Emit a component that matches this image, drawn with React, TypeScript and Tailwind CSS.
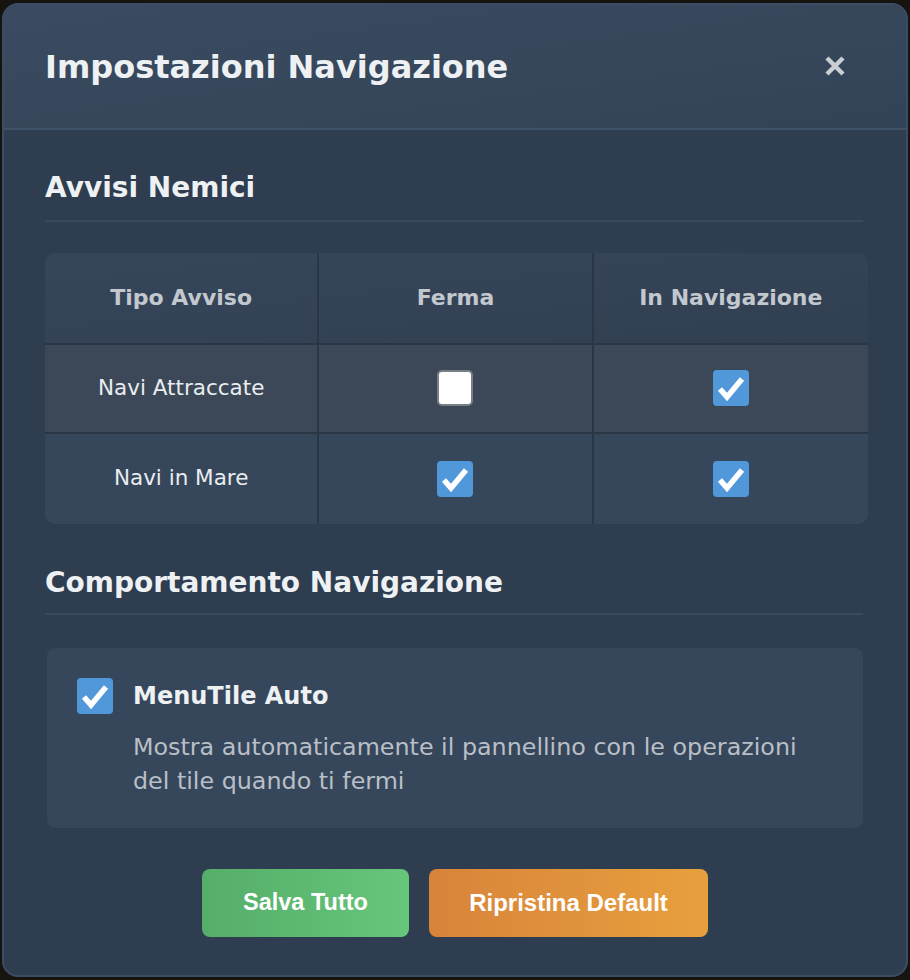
import React from "react";

function Check({ checked }: { checked: boolean }) {
  if (!checked) {
    return (
      <span className="inline-block w-[36px] h-[36px] rounded-[5px] bg-white border-2 border-[#7a7f86]" />
    );
  }
  return (
    <span className="inline-flex w-[36px] h-[36px] rounded-[4px] bg-[#5198da] items-center justify-center">
      <svg width="36" height="36" viewBox="0 0 36 36">
        <polyline
          points="7,19 14,27 29,9"
          fill="none"
          stroke="white"
          strokeWidth="5.5"
          strokeLinejoin="miter"
        />
      </svg>
    </span>
  );
}

const rows = [
  { label: "Navi Attraccate", ferma: false, nav: true, cls: "h-[89px] bg-[#3c4858] border-b-2 border-[#2b3645]" },
  { label: "Navi in Mare", ferma: true, nav: true, cls: "h-[90px] bg-[#36465b]" },
];

export default function App() {
  return (
    <div
      className="w-[910px] h-[980px] bg-[#17130f] pt-[3px] pl-[2px]"
      style={{ fontFamily: '"DejaVu Sans", sans-serif' }}
    >
      <div className="w-[906px] h-[974px] rounded-[16px] border-2 border-[#3b4d64] bg-[#2f3d50] overflow-hidden flex flex-col">
        <div className="h-[125px] shrink-0 bg-gradient-to-br from-[#3a4b61] to-[#334357] border-b-2 border-[#3e526a] flex items-center justify-between pl-[41px] pr-[60px]">
          <h2 className="text-[32px] font-bold text-[#eef1f3] leading-none">
            Impostazioni Navigazione
          </h2>
          <svg width="22" height="22" viewBox="0 0 22 22" className="mt-[-2px]">
            <path d="M3 3 L19 19 M19 3 L3 19" stroke="#c9ced3" strokeWidth="4.5" />
          </svg>
        </div>

        <div className="px-[41px] pt-[41px]">
          <h3 className="text-[28px] font-bold text-[#eef1f3] leading-[1.2] pb-[15px] border-b-2 border-[#3a4a5e] mr-[2px]">
            Avvisi Nemici
          </h3>

          <div className="mt-[31px] rounded-[10px] overflow-hidden -mr-[3px]">
            <div className="grid grid-cols-3 h-[92px] bg-gradient-to-br from-[#36465a] to-[#313f52] border-b-2 border-[#2b3645]">
              {["Tipo Avviso", "Ferma", "In Navigazione"].map((h, i) => (
                <div
                  key={h}
                  className={`flex items-center justify-center text-[22px] font-bold text-[#c2c8ce] ${i < 2 ? "border-r-2 border-[#2b3645]" : ""}`}
                >
                  {h}
                </div>
              ))}
            </div>
            {rows.map((r) => (
              <div key={r.label} className={`grid grid-cols-3 ${r.cls}`}>
                <div className="flex items-center justify-center text-[21.5px] text-[#e9edf0] border-r-2 border-[#2b3645]">
                  {r.label}
                </div>
                <div className="flex items-center justify-center border-r-2 border-[#2b3645]">
                  <Check checked={r.ferma} />
                </div>
                <div className="flex items-center justify-center">
                  <Check checked={r.nav} />
                </div>
              </div>
            ))}
          </div>

          <h3 className="mt-[42px] text-[28px] font-bold text-[#eef1f3] leading-[1.2] pb-[14px] border-b-2 border-[#3a4a5e] mr-[2px]">
            Comportamento Navigazione
          </h3>

          <div className="mt-[33px] mx-[2px] rounded-[8px] bg-[#36475b] pt-[30px] pb-[30px] pl-[30px] pr-[30px] flex gap-[20px]">
            <div className="shrink-0">
              <Check checked={true} />
            </div>
            <div className="flex flex-col">
              <div className="text-[24px] font-bold text-[#eef1f3] leading-[1.2] mt-[4px]">
                MenuTile Auto
              </div>
              <p className="mt-[19px] text-[23.8px] text-[#b9bfc7] leading-[34px]">
                Mostra automaticamente il pannellino con le operazioni
                <br />
                del tile quando ti fermi
              </p>
            </div>
          </div>

          <div
            className="mt-[41px] flex justify-center gap-[20px]"
            style={{ fontFamily: '"Liberation Sans", Arial, sans-serif' }}
          >
            <button className="w-[207px] h-[68px] rounded-[8px] bg-gradient-to-r from-[#55ad6a] to-[#66c67a] text-white text-[23.5px] font-bold">
              Salva Tutto
            </button>
            <button className="w-[279px] h-[68px] rounded-[8px] bg-gradient-to-r from-[#d8833a] to-[#e8a03d] text-white text-[24px] font-bold">
              Ripristina Default
            </button>
          </div>
        </div>
      </div>
    </div>
  );
}
